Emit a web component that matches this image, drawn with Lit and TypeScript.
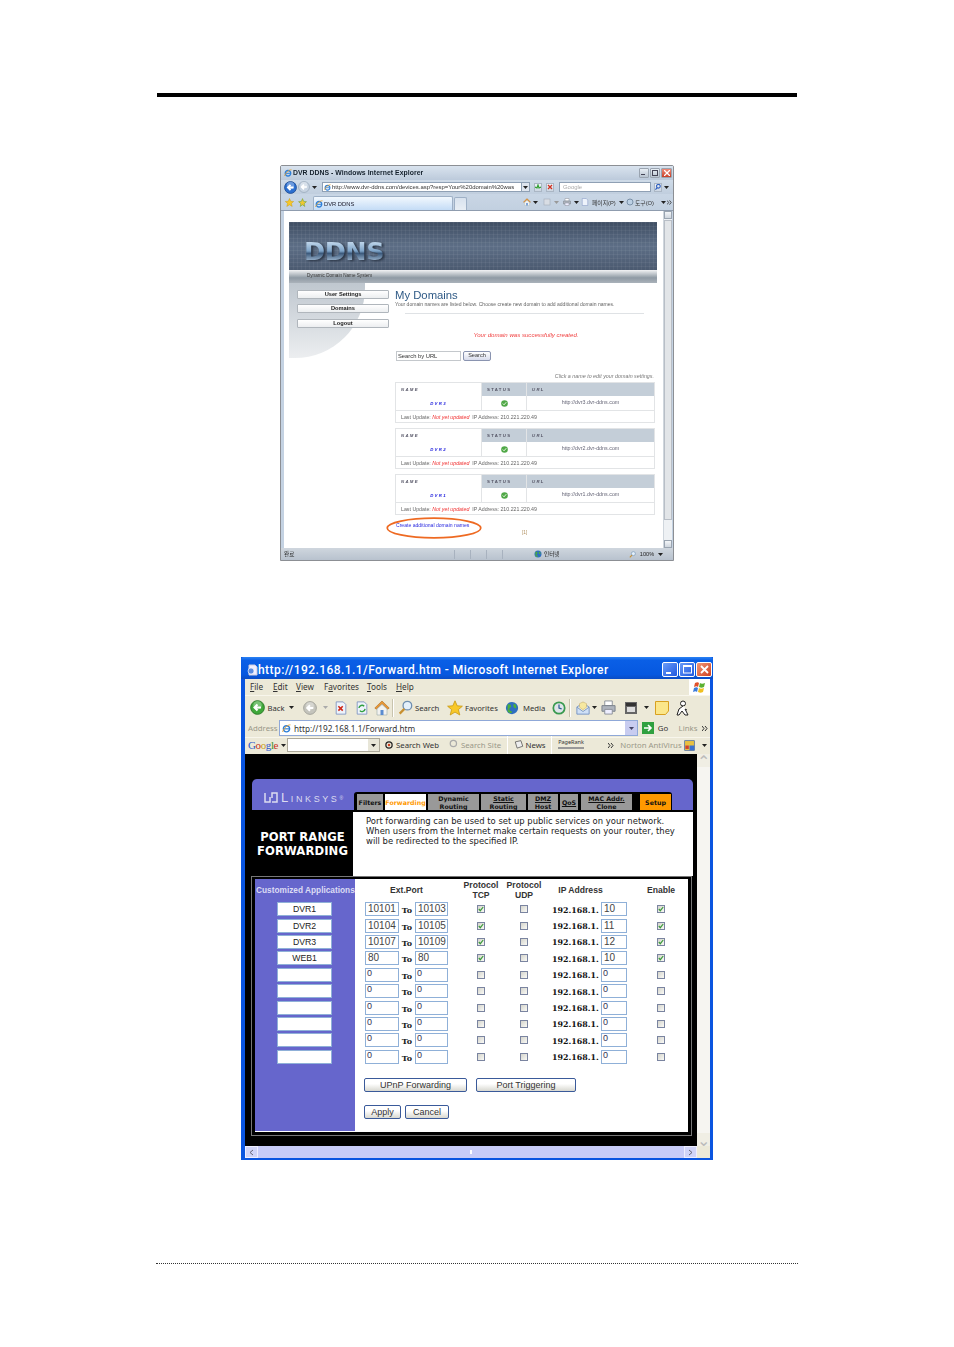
import { LitElement, html, css, svg } from "lit";
import { customElement } from "lit/decorators.js";

const cell = (w: number, c: unknown = "", cls = "") =>
  html`<div class="cell ${cls}" style="width:${w}px">${c}</div>`;
const ic = (s: number, body: unknown) =>
  html`<svg width=${s} height=${s} viewBox="0 0 16 16">${body}</svg>`;

const arrowCircle = (s: number, fill: string, stroke: string, dir = 1) =>
  ic(s, svg`<circle cx="8" cy="8" r="7.3" fill=${fill} stroke=${stroke} stroke-width="1"/>
  <circle cx="8" cy="5.5" r="4.5" fill="#fff" opacity=".3"/>
  <path d=${dir > 0 ? "M11.8 8H5.5M8 4.8 4.8 8 8 11.2" : "M4.2 8h6.3M8 4.8 11.2 8 8 11.2"} fill="none" stroke="#fff" stroke-width="2.2"/>`);
const tri = (c = "#222") => html`<svg width="5" height="3" viewBox="0 0 5 3"><path d="M0 0h5L2.5 3z" fill=${c}/></svg>`;
const chev = (c = "#333") => html`<svg width="6" height="5" viewBox="0 0 6 5"><path d="M0 0l2 2.5L0 5M3 0l2 2.5L3 5" fill="none" stroke=${c}/></svg>`;
const star = (s: number) => ic(s, svg`<path d="M8 .8 10.2 5.8 15.4 6.2 11.4 9.6 12.8 15 8 12.1 3.2 15 4.6 9.6.6 6.2 5.8 5.8z" fill="#f8c828" stroke="#c89810" stroke-width=".8"/>`);
const ie = (s: number) => ic(s, svg`<circle cx="8" cy="8.5" r="5.5" fill="none" stroke="#2c7ed8" stroke-width="2.6"/><path d="M3 8.6h10" stroke="#2c7ed8" stroke-width="2"/><path d="M1 14C4 6 10 1.5 15 1.5" fill="none" stroke="#f0a020" stroke-width="1.6"/>`);
const doc = (s: number, inner: unknown) => ic(s, svg`<path d="M2.5 1h8l3 3v11h-11z" fill="#eef3fb" stroke="#7f93c0"/>${inner}`);
const home = (s: number) => ic(s, svg`<path d="M8 1 .8 8l1.4 1.2L8 3.8l5.8 5.4L15.2 8z" fill="#e89838" stroke="#b06a18" stroke-width=".6"/><path d="M3 9v6h10V9L8 4.5z" fill="#f2f2f0" stroke="#9aa" stroke-width=".6"/><rect x="6.5" y="10" width="3" height="5" fill="#5a8cd0"/>`);
const globe = (s: number) => ic(s, svg`<circle cx="8" cy="8" r="7" fill="#2f6fc0"/><path d="M3 4c2-1 4 0 4 2S4 8 5 10s3 1 3 3c-2 1.500-4 .5-5-1M10 3c2 0 3 2 3 4s-2 1-3 0 0-3 0-4z" fill="#4caf3c"/>`);
const printer = (s: number) => ic(s, svg`<path d="M4 1h8v5H4z" fill="#fff" stroke="#8a8f98"/><path d="M1 6h14v6H1z" fill="#aeb4bd" stroke="#7a808a"/><path d="M4 10h8v5H4z" fill="#eef" stroke="#8a8f98"/>`);
const magnifier = (s: number) => ic(s, svg`<circle cx="10" cy="6" r="4.6" fill="#e4f0fb" stroke="#6f8fb0" stroke-width="1.4"/><path d="M6.800 9.500 1.800 14.500" stroke="#c89030" stroke-width="2.4"/>`);
const mail = (s: number) => ic(s, svg`<path d="M1 7l7-5 7 5v8H1z" fill="#cfe0f6" stroke="#6f8fc0"/><path d="M1 7l7 5 7-5" fill="#f4f0d8" stroke="#6f8fc0"/><path d="M4 3l4-2 4 2v4l-4 3-4-3z" fill="#f6e8a0" stroke="#c0a050" stroke-width=".5"/>`);
const windowBtn = (cls: string, inner: unknown) => html`<div class="wbtn ${cls}">${inner}</div>`;
const okIcon = html`<svg width="7" height="7" viewBox="0 0 8 8"><circle cx="4" cy="4" r="3.800" fill="#50a848"/><path d="M2 4l1.500 1.500L6 2.500" fill="none" stroke="#e8f8e0" stroke-width="1.100"/></svg>`;

const domains = ["DVR3", "DVR2", "DVR1"];
const rows = [
  ["DVR1", "10101", "10103", 1, "10", 1],
  ["DVR2", "10104", "10105", 1, "11", 1],
  ["DVR3", "10107", "10109", 1, "12", 1],
  ["WEB1", "80", "80", 1, "10", 1],
  ...Array.from({ length: 6 }, () => ["", "0", "0", 0, "0", 0]),
] as [string, string, string, number, string, number][];
const tabs = [
  { t: ["Filters"], w: 26, m: 3 },
  { t: ["Forwarding"], w: 41, m: 2, cls: "on" },
  { t: ["Dynamic", "Routing"], w: 51, m: 2 },
  { t: ["Static", "Routing"], w: 45, m: 2, cls: "ul" },
  { t: ["DMZ", "Host"], w: 30, m: 2, cls: "ul" },
  { t: ["QoS"], w: 18, m: 2, cls: "ul" },
  { t: ["MAC Addr.", "Clone"], w: 51, m: 3, cls: "ul" },
  { t: ["Setup"], w: 31, m: 8, cls: "setup" },
];
const check = (on: number) => html`<div class="cb">${on ? html`<svg width="6" height="6" viewBox="0 0 6 6"><path d="M.8 3l1.500 1.700L5.200 1" fill="none" stroke="#3a9a3a" stroke-width="1.200"/></svg>` : ""}</div>`;

@customElement("app-root")
export class AppRoot extends LitElement {
  static styles = css`
    :host { display: block; width: 954px; height: 1347px; background: #fff; overflow: hidden; font-family: "Liberation Sans", "Noto Sans CJK KR", sans-serif; }
    .page { display: flex; flex-direction: column; padding-top: 93px; }
    .rule { margin-left: 157px; width: 640px; height: 4px; background: #000; }
    .dots { margin: 103px 0 0 156px; width: 642px; border-top: 1px dotted #333; }
    .cell { display: flex; align-items: center; justify-content: center; height: 100%; flex: none; white-space: nowrap; }
    .cell.l { justify-content: flex-start; }
    .row { display: flex; align-items: center; }
    .push { margin-left: auto; }

    /* Window 1 */
    .w1 { margin: 68px 0 0 280px; width: 394px; height: 396px; box-sizing: border-box; border: 1px solid #8c8f94; background: #c4d2e2; display: flex; flex-direction: column; filter: blur(.35px); position: relative; border-radius: 2px 2px 0 0; }
    .w1 .title { height: 14px; background: linear-gradient(#d9e3ee, #bccadb); font: bold 6.850px "Liberation Sans", sans-serif; color: #14202c; letter-spacing: .05px; }
    .w1 .wbtn { width: 10px; height: 10px; border: 1px solid #9aa4b0; box-sizing: border-box; background: linear-gradient(#e8eef4, #b9c4d0); display: flex; align-items: center; justify-content: center; margin-right: 1px; border-radius: 1px; }
    .w1 .wbtn.x { background: linear-gradient(#ee8a78, #c84028); width: 11px; }
    .w1 .addr { height: 15px; background: linear-gradient(#cfdbe8, #c0cede); font-size: 5.950px; color: #222; }
    .w1 .ibox { height: 10px; background: #fff; border: 1px solid #8fa0b4; box-sizing: border-box; width: 100%; display: flex; align-items: center; padding-left: 1px; color: #333; overflow: hidden; gap: 1px; }
    .w1 .ibox.g { color: #aaa; padding-left: 3px; }
    .w1 .ddn { margin-left: auto; flex: none; width: 7px; height: 8px; background: #dfe5ee; border-left: 1px solid #8fa0b4; display: flex; align-items: center; justify-content: center; }
    .w1 .small { width: 8px; height: 9px; background: linear-gradient(#eef2f7, #ccd6e2); border: 1px solid #aab6c4; box-sizing: border-box; display: flex; align-items: center; justify-content: center; }
    .w1 .tabs { height: 17px; background: linear-gradient(#c9d6e5, #c2d0e0); font-size: 5.800px; color: #333; border-bottom: 1px solid #8f9cae; box-sizing: border-box; }
    .w1 .tab { width: 100%; height: 14px; align-self: flex-end; background: linear-gradient(#f2f8fe, #c4dcf6); border: 1px solid #9eb0c6; border-bottom: 0; box-sizing: border-box; border-radius: 2px 2px 0 0; display: flex; align-items: center; gap: 1px; padding-left: 1px; color: #223; }
    .w1 .newtab { width: 100%; height: 13px; align-self: flex-end; background: linear-gradient(#d8e2ee, #e8eef4); border: 1px solid #9eb0c6; border-bottom: 0; box-sizing: border-box; border-radius: 2px 2px 0 0; }
    .w1 .content { flex: none; height: 337px; display: flex; padding-left: 3px; }
    .w1 .doc { width: 379px; height: 337px; background: #fff; padding: 11px 0 0 5px; box-sizing: border-box; }
    .banner { width: 368px; height: 48px; background-color: #4a5b72; background-image: linear-gradient(90deg, rgba(255,255,255,.05) 1px, transparent 1px), linear-gradient(rgba(255,255,255,.05) 1px, transparent 1px), linear-gradient(#3f4e63, #5d6e86 50%, #4b5a70); background-size: 4px 4px, 4px 4px, 100% 100%; display: flex; align-items: center; padding-left: 15px; box-sizing: border-box; }
    .logo { font: bold 25.500px "DejaVu Sans", sans-serif; letter-spacing: -.5px; background: linear-gradient(#d4e6f6 10%, #7ea4c8 50%, #3c5a7c 58%, #b8d0e6 90%); -webkit-background-clip: text; background-clip: text; color: transparent; filter: drop-shadow(2px 1px 1px #2a3444); margin-top: 9px; }
    .strip { width: 368px; height: 13px; background: linear-gradient(#f2f3f4, #8f9aa4 60%, #aab2ba); font-size: 4.600px; color: #333; padding-left: 18px; box-sizing: border-box; line-height: 12px; }
    .body { display: flex; position: relative; }
    .side { width: 106px; height: 240px; display: flex; flex-direction: column; position: relative; }
    .side::before { content: ""; position: absolute; left: 0; top: 0; width: 76px; height: 75px; background: linear-gradient(#bfc7cf, #eceef0); border-bottom-right-radius: 70px 70px; }
    .navb { position: relative; margin-left: 8px; width: 92px; height: 9px; margin-top: 5px; background: linear-gradient(#fff, #eceef0); border: 1px solid #b0b6bc; box-sizing: border-box; border-radius: 1px; font: bold 5.700px/7px "Liberation Sans", sans-serif; text-align: center; color: #222; }
    .navb.first { margin-top: 7px; }
    .navb.last { margin-top: 6px; }
    .main { width: 262px; display: flex; flex-direction: column; color: #666; font-size: 5.050px; }
    .h1 { margin-top: 6px; font: 11.300px/12px "Liberation Sans", sans-serif; color: #2f5a86; }
    .sub { line-height: 6px; white-space: nowrap; }
    .hr { margin: 6px 0 0 10px; width: 239px; height: 1px; background: #dfe2e5; }
    .msg { margin-top: 17px; height: 8px; line-height: 8px; font-style: italic; font-size: 6.100px; color: #f04040; text-align: center; }
    .search { margin: 12px 0 0 1px; display: flex; gap: 2px; height: 10px; }
    .sinput { width: 65px; height: 10px; border: 1px solid #c4c8cc; box-sizing: border-box; color: #333; font-size: 5.800px; line-height: 8px; padding-left: 1px; }
    .sbtn { width: 28px; height: 10px; border: 1px solid #8a94b0; box-sizing: border-box; background: linear-gradient(#fff, #d8dcec); font-size: 5.600px; line-height: 7px; text-align: center; color: #333; border-radius: 2px; }
    .hint { margin-top: 11px; line-height: 8px; height: 8px; text-align: right; padding-right: 3px; font-style: italic; font-size: 5.350px; color: #777; }
    .dt { margin-top: 2px; width: 260px; height: 41px; border: 1px solid #e2e4e6; box-sizing: border-box; display: grid; grid-template-columns: 85px 45px 1fr; grid-template-rows: 13px 14px 1fr; }
    .dt + .dt { margin-top: 5px; }
    .dt > div { display: flex; align-items: center; }
    .dh { font: italic bold 4.300px "Liberation Sans", sans-serif; letter-spacing: 1.300px; color: #556; padding-left: 5px; }
    .dh.s { background: #c4ced8; font-style: normal; border-left: 1px solid #e2e4e6; }
    .dh.u { background: #c4ced8; border-left: 1px solid #e2e4e6; }
    .dn { justify-content: center; font: italic bold 4.300px "Liberation Sans", sans-serif; letter-spacing: 1.300px; color: #2222dd; }
    .ds { justify-content: center; border-left: 1px solid #e2e4e6; }
    .du { justify-content: center; border-left: 1px solid #e2e4e6; font-size: 5.350px; color: #667; padding-bottom: 2px; box-sizing: border-box; }
    .df { grid-column: 1 / 4; border-top: 1px solid #e2e4e6; padding-left: 5px; font-size: 5.250px; color: #666; white-space: pre; }
    .df i { color: #f03030; }
    .lnk { margin: 6px 0 0 1px; line-height: 8px; height: 8px; font-size: 5.100px; color: #2a2ae0; position: relative; }
    .oval { position: absolute; left: -10px; top: -4px; width: 96px; height: 22px; }
    .pg { margin-left: 127px; font-size: 4.800px; color: #b09060; line-height: 8px; }
    .w1 .sb { width: 9px; background: #eef1f4; border-left: 1px solid #cfd6dd; box-sizing: border-box; display: flex; flex-direction: column; }
    .w1 .sb .b { height: 8px; background: linear-gradient(#f4f6f8, #cfd6de); border: 1px solid #9aa4b0; box-sizing: border-box; }
    .w1 .sb .th { height: 300px; background: #e2e5e8; border: 1px solid #b8bec6; box-sizing: border-box; margin-top: 1px; }
    .w1 .sb .sp { flex: 1; }
    .w1 .status { height: 12px; background: linear-gradient(#cfd6de, #b8c2ce); font-size: 5.600px; color: #222; }
    .w1 .sep { width: 1px; height: 9px; background: #a8b2bf; }

    /* Window 2 */
    .w2 { margin: 96px 0 0 241px; width: 472px; height: 503px; box-sizing: border-box; border: solid #0a55e0; border-width: 0 3px 2px 4px; background: #ece9d8; display: flex; flex-direction: column; font-family: "Noto Sans", sans-serif; color: #333; }
    .w2 .title { margin: 0 -3px 0 -4px; height: 22px; background: linear-gradient(#2b83f4, #0a5fe6 15%, #0658e0 80%, #0a4cc4); color: #fff; font: 500 12px "Roboto", sans-serif; letter-spacing: .44px; white-space: nowrap; border-radius: 3px 3px 0 0; padding-top: 4px; box-sizing: border-box; }
    .w2 .title .push { margin-top: -1px; }
    .w2 .wbtn { width: 16px; height: 15px; box-sizing: border-box; border: 1px solid #fff; border-radius: 2px; background: linear-gradient(135deg, #6a9cf8, #1e58e0); margin-right: 1px; display: flex; align-items: center; justify-content: center; }
    .w2 .wbtn.x { background: linear-gradient(135deg, #f09878, #d04020); }
    .w2 .menu { height: 16px; font-size: 8.200px; background: #ece9d8; }
    .w2 .menu .cell { padding-bottom: 2px; box-sizing: border-box; }
    .w2 .menu u { text-decoration: underline; }
    .w2 .flag { margin-left: auto; width: 21px; height: 16px; background: #fff; display: flex; align-items: center; justify-content: center; }
    .w2 .bar { height: 24px; font-size: 7.700px; border-top: 1px solid #f8f6ec; box-sizing: border-box; }
    .w2 .vsep { width: 1px; height: 18px; background: #c8c4ae; border-right: 1px solid #fff; }
    .w2 .ad { height: 18px; font-size: 7.800px; }
    .w2 .adbox { width: 100%; height: 16px; background: #fff; border: 1px solid #8fa8d8; box-sizing: border-box; display: flex; align-items: center; gap: 3px; padding-left: 2px; color: #333; font-size: 8.200px; }
    .w2 .adbox .dd { margin-left: auto; width: 12px; height: 14px; background: #c8ccf0; display: flex; align-items: center; justify-content: center; }
    .w2 .gg { height: 17px; font-size: 7.800px; border-top: 1px solid #f8f6ec; box-sizing: border-box; padding-bottom: 2px; }
    .google { font: 11px "Liberation Serif", serif; letter-spacing: -.4px; }
    .google .b { color: #2a55c8; } .google .r { color: #c83020; } .google .y { color: #c8a020; } .google .g { color: #30902a; }
    .gin { width: 100%; height: 14px; background: #fff; border: 1px solid #aca899; box-sizing: border-box; display: flex; justify-content: flex-end; }
    .gin .dd { width: 11px; background: #e8e6d8; display: flex; align-items: center; justify-content: center; }
    .muted { color: #9a9888; }
    .pr { display: flex; flex-direction: column; align-items: stretch; font-size: 5.500px; line-height: 7px; height: 12px; }
    .pr span { height: 2px; border: 1px solid #999; background: #eee; box-sizing: border-box; margin-top: 1px; }

    .view { flex: none; height: 392px; display: flex; background: #000; }
    .screen { width: 452px; background: #000; padding-top: 25px; box-sizing: border-box; }
    .vsb { width: 13px; background: #f6f5f1; display: flex; flex-direction: column; justify-content: space-between; align-items: center; }
    .vsb div { width: 13px; height: 13px; background: #f0eee4; color: #bbb; display: flex; align-items: center; justify-content: center; }
    .hsb { height: 12px; flex: none; display: flex; background: #eef; }
    .hsb .e { width: 13px; height: 12px; background: #d0d4f8; border: 1px solid #eef; box-sizing: border-box; display: flex; align-items: center; justify-content: center; }
    .hsb .t { flex: 1; background: #c8ccf8; display: flex; align-items: center; justify-content: center; }
    .hsb .t span { width: 2px; height: 4px; background: #fff; }
    .hsb .c { width: 13px; background: #ece9d8; }

    .lhead { margin-left: 7px; width: 441px; height: 31px; background: #6666cc; border-radius: 5px 5px 0 0; display: flex; align-items: flex-end; }
    .brand { width: 102px; height: 31px; display: flex; align-items: center; gap: 3px; padding: 6px 0 0 12px; box-sizing: border-box; color: #dcdcf0; font: 13px "Liberation Sans", sans-serif; letter-spacing: 2.600px; font-variant: small-caps; }
    .brand sup { font-size: 5px; letter-spacing: 0; margin-left: -3px; }
    .tabs2 { height: 18px; width: 318px; background: #000; display: flex; border-radius: 3px 3px 0 0; padding-top: 2px; box-sizing: border-box; }
    .t2 { flex: none; height: 16px; background: #999; display: flex; flex-direction: column; align-items: center; justify-content: center; overflow: hidden; font: bold 6.300px/8px "DejaVu Sans", sans-serif; color: #111; padding-top: 2px; box-sizing: border-box; white-space: nowrap; }
    .t2.two { justify-content: flex-start; padding-top: 1px; }
    .t2.on { background: #fff; color: #ff9900; }
    .t2.setup { background: #ff9900; }
    .t2.ul span:first-child { text-decoration: underline; }
    .lmid { display: flex; margin: 2px 0 0 0; height: 64px; }
    .lname { width: 108px; color: #fff; font: bold 11.600px/14px "DejaVu Sans", sans-serif; text-align: center; padding: 18px 0 0 7px; box-sizing: border-box; letter-spacing: .1px; }
    .ldesc { width: 340px; background: #fff; color: #222; font: 8.440px/10px "DejaVu Sans", sans-serif; padding: 4px 0 0 13px; box-sizing: border-box; white-space: nowrap; }
    .frame { margin: 0 0 0 6px; width: 441px; height: 260px; box-sizing: border-box; border: 1px solid #777; padding: 2px 3px 3px; background: #000; }
    .inner { display: flex; border-bottom: 1px solid #fff; height: 252px; background: #fff; }
    .apps { width: 100px; background: #6666cc; flex: none; }
    .apphd { height: 22px; display: flex; align-items: center; font: bold 8.300px "Liberation Sans", sans-serif; color: #dcdcf4; white-space: nowrap; padding-left: 1px; box-sizing: border-box; }
    .appgrid { display: grid; grid-auto-rows: 16.400px; padding-left: 22px; }
    .fields { width: 333px; padding-left: 10px; box-sizing: border-box; font: 8.600px "Liberation Sans", sans-serif; color: #222; }
    .hdr, .frow { display: grid; grid-template-columns: 34px 16px 33px 66px 20px 18px 49px 26px 62px; align-items: center; justify-items: center; }
    .hdr { height: 22px; font-weight: bold; line-height: 10px; text-align: center; color: #333; white-space: nowrap; }
    .hdr .ep { grid-column: 1 / 4; }
    .hdr .ip { grid-column: 6 / 9; }
    .hdr .wide { width: 0; display: flex; justify-content: center; }
    .frow { height: 16.400px; }
    .fi { width: 100%; height: 14px; background: #fff; border: 1px solid #8fb0d8; box-sizing: border-box; font: 10px/12px "Liberation Sans", sans-serif; color: #444; padding-left: 2px; white-space: nowrap; overflow: hidden; }
    .fi.z { font-size: 9px; line-height: 9px; color: #335; padding-left: 1px; }
    .fi.c { text-align: center; padding: 0; color: #222; width: 55px; font-size: 8.700px; }
    .to { font: bold 8px "DejaVu Serif", serif; color: #222; padding-top: 2px; }
    .ipx { font: bold 7.900px "DejaVu Serif", serif; color: #111; white-space: nowrap; padding-top: 2px; justify-self: start; }
    .cb { width: 8px; height: 8px; border: 1px solid #7a84a0; box-sizing: border-box; background: linear-gradient(135deg, #d4d4cc, #fafaf6); display: flex; align-items: center; justify-content: center; }
    .cbcell { padding-left: 6px; justify-self: center; }
    .btns { display: flex; margin: 13.500px 0 0 -1px; }
    .fb { height: 14px; box-sizing: border-box; border: 1px solid #3a5a9a; border-radius: 2px; background: linear-gradient(#fff 40%, #d8d8d0); font: 9px/12px "Liberation Sans", sans-serif; color: #333; text-align: center; }
    .upnp { width: 103px; margin-right: 9px; } .ptrig { width: 100px; }
    .apply { width: 37px; margin-right: 4px; } .cancel { width: 44px; }
    .btns2 { margin-top: 13px; }
  `;

  private w1() {
    return html`<div class="w1">
      <div class="title row">
        ${cell(2)}${cell(10, ie(8))}<span>DVR DDNS - Windows Internet Explorer</span>
        <div class="row push">
          ${windowBtn("", html`<svg width="6" height="6"><rect y="4" width="4" height="1" fill="#445"/></svg>`)}
          ${windowBtn("", html`<svg width="6" height="6"><rect x=".5" y=".5" width="5" height="5" fill="none" stroke="#445"/></svg>`)}
          ${windowBtn("x", html`<svg width="6" height="6"><path d="M0 0l6 6M6 0l-6 6" stroke="#fff" stroke-width="1.300"/></svg>`)}
        </div>
      </div>
      <div class="addr row">
        ${cell(2)}${cell(14, arrowCircle(13, "#2c6fd0", "#1c4a90"))}${cell(14, arrowCircle(12, "#c8d4e2", "#98a8ba"))}${cell(6, tri())}${cell(5)}
        ${cell(208, html`<div class="ibox">${ie(7)}<span>http://www.dvr-ddns.com/devices.asp?resp=Your%20domain%20was</span><div class="ddn">${tri()}</div></div>`)}
        ${cell(3)}${cell(10, html`<div class="small"><svg width="6" height="6"><path d="M0 3l2 1 1-3 1 3 2-1" fill="none" stroke="#30a030" stroke-width="1.200"/></svg></div>`)}${cell(2)}
        ${cell(10, html`<div class="small"><svg width="6" height="6"><path d="M1 1l4 4M5 1l-4 4" stroke="#d03020" stroke-width="1.300"/></svg></div>`)}${cell(4)}
        ${cell(92, html`<div class="ibox g">Google</div>`)}${cell(2)}
        ${cell(9, html`<div class="small">${ic(6, svg`<circle cx="9" cy="6" r="5" fill="none" stroke="#3060c0" stroke-width="3"/><path d="M6 10 1 15" stroke="#3060c0" stroke-width="3"/>`)}</div>`)}${cell(8, tri())}
      </div>
      <div class="tabs row">
        ${cell(2)}${cell(13, star(9))}${cell(13, ic(9, svg`<path d="M8 1 10 6l5 .5-4 3.500 1 5-4-3-4 3 1-5-4-3.500L6 6z" fill="#f0c830" stroke="#70a030"/>`))}${cell(4)}
        ${cell(140, html`<div class="tab">${ie(8)}<span>DVR DDNS</span></div>`)}${cell(1)}
        ${cell(13, html`<div class="newtab"></div>`)}${cell(55)}
        ${cell(10, home(8))}${cell(7, tri())}${cell(2)}${cell(12, ic(8, svg`<rect x="2" y="2" width="12" height="12" fill="#d8dde4" stroke="#9aa4b0"/>`))}${cell(7, tri("#999"))}${cell(2)}
        ${cell(10, printer(8))}${cell(8, tri())}${cell(9, doc(8, ""))}${cell(3)}${cell(26, "페이지(P)", "l")}${cell(7, tri())}${cell(10, ic(8, svg`<circle cx="8" cy="8" r="6" fill="#bcd0e4" stroke="#7a90a8" stroke-width="2"/>`))}${cell(25, "도구(O)", "l")}${cell(7, tri())}${cell(5, chev())}
      </div>
      <div class="content">
        <div class="doc">
          <div class="banner"><span class="logo">DDNS</span></div>
          <div class="strip">Dynamic Domain Name System</div>
          <div class="body">
            <div class="side">
              <div class="navb first">User Settings</div>
              <div class="navb">Domains</div>
              <div class="navb last">Logout</div>
            </div>
            <div class="main">
              <div class="h1">My Domains</div>
              <div class="sub">Your domain names are listed below.  Choose create new domain to add additional domain names.</div>
              <div class="hr"></div>
              <div class="msg">Your domain was successfully created.</div>
              <div class="search"><div class="sinput">Search by URL</div><div class="sbtn">Search</div></div>
              <div class="hint">Click a name to edit your domain settings.</div>
              ${domains.map((d, i) => html`<div class="dt">
                <div class="dh">NAME</div><div class="dh s">STATUS</div><div class="dh u">URL</div>
                <div class="dn">${d}</div><div class="ds">${okIcon}</div><div class="du">http://dvr${3 - i}.dvr-ddns.com</div>
                <div class="df">Last Update: <i>Not yet updated</i>  IP Address: 210.221.220.49</div>
              </div>`)}
              <div class="lnk">Create additional domain names
                <svg class="oval" viewBox="0 0 96 22"><ellipse cx="48" cy="11" rx="46.800" ry="9.800" fill="none" stroke="#ee6a22" stroke-width="1.700"/></svg>
              </div>
              <div class="pg">[1]</div>
            </div>
          </div>
        </div>
        <div class="sb"><div class="b"></div><div class="th"></div><div class="sp"></div><div class="b"></div></div>
      </div>
      <div class="status row">
        ${cell(3)}${cell(80, "완료", "l")}${cell(90)}${cell(1, html`<div class="sep"></div>`)}${cell(15)}${cell(1, html`<div class="sep"></div>`)}${cell(15)}${cell(1, html`<div class="sep"></div>`)}${cell(15)}${cell(1, html`<div class="sep"></div>`)}${cell(30)}${cell(9, globe(8))}${cell(2)}${cell(84, "인터넷", "l")}${cell(8, magnifier(7))}${cell(22, "100%")}${cell(5, tri())}
      </div>
    </div>`;
  }

  private w2() {
    return html`<div class="w2">
      <div class="title row">
        ${cell(5)}${cell(12, html`<svg width="11" height="12" viewBox="0 0 11 12"><path d="M2 1h6l2 2v8H2z" fill="#eef" stroke="#ccd"/><circle cx="4" cy="7" r="3" fill="#5a8ce0" stroke="#fff" stroke-width=".6"/></svg>`)}<span>http://192.168.1.1/Forward.htm - Microsoft Internet Explorer</span>
        <div class="row push">
          ${windowBtn("", html`<svg width="8" height="8"><rect y="6" width="5" height="2" fill="#fff"/></svg>`)}
          ${windowBtn("", html`<svg width="9" height="9"><rect x=".5" y="1" width="8" height="7" fill="none" stroke="#fff"/><rect width="9" height="2" fill="#fff"/></svg>`)}
          ${windowBtn("x", html`<svg width="9" height="9"><path d="M1 1l7 7M8 1 1 8" stroke="#fff" stroke-width="1.800"/></svg>`)}
        </div>
      </div>
      <div class="menu row">
        ${cell(5)}${cell(23, html`<span><u>F</u>ile</span>`, "l")}${cell(23, html`<span><u>E</u>dit</span>`, "l")}${cell(28, html`<span><u>V</u>iew</span>`, "l")}${cell(43, html`<span>F<u>a</u>vorites</span>`, "l")}${cell(29, html`<span><u>T</u>ools</span>`, "l")}${cell(25, html`<span><u>H</u>elp</span>`, "l")}
        <div class="flag"><svg width="13" height="12" viewBox="0 0 13 12"><path d="M2 2c2-1 3-1 4 0L5 6C4 5 3 5 1 6z" fill="#e0502a"/><path d="M7 2c1 1 3 1 5 0l-1 4c-2 1-3 1-5 0z" fill="#5ab030"/><path d="M1 7c2-1 3-1 4 0l-1 4c-1-1-2-1-4 0z" fill="#3a7ad8"/><path d="M6 7c1 1 3 1 5 0l-1 4c-2 1-3 1-5 0z" fill="#f0c020"/></svg></div>
      </div>
      <div class="bar row">
        ${cell(4)}${cell(16, arrowCircle(15, "#3fa83a", "#2a7a28"))}${cell(22, "Back")}${cell(9, tri())}${cell(6)}${cell(16, arrowCircle(14, "#c4c4bc", "#a0a098"))}${cell(5)}${cell(5, tri("#aaa"))}${cell(4)}
        ${cell(18, doc(14, svg`<path d="M5 6l5 5M10 6l-5 5" stroke="#d02818" stroke-width="1.800"/>`))}${cell(3)}${cell(18, doc(14, svg`<path d="M4.500 8a3.500 3.500 0 0 1 6-2M11.500 9a3.500 3.500 0 0 1-6 2" fill="none" stroke="#30a040" stroke-width="1.600"/>`))}${cell(2)}${cell(18, home(16))}${cell(1)}${cell(2, html`<div class="vsep"></div>`)}${cell(3)}
        ${cell(17, magnifier(15))}${cell(1)}${cell(25, "Search", "l")}${cell(6)}${cell(18, star(16))}${cell(1)}${cell(33, "Favorites", "l")}${cell(6)}${cell(16, globe(14))}${cell(3)}${cell(21, "Media", "l")}${cell(8)}${cell(14, html`<svg width="14" height="14" viewBox="0 0 16 16"><circle cx="8" cy="8" r="6.500" fill="#dfe4ea" stroke="#3a9a50" stroke-width="2"/><path d="M8 4v4l3 1" fill="none" stroke="#2a5a90" stroke-width="1.400"/></svg>`)}${cell(3)}${cell(2, html`<div class="vsep"></div>`)}${cell(4)}
        ${cell(15, mail(14))}${cell(8, tri())}${cell(20, printer(15))}${cell(6)}${cell(14, html`<svg width="12" height="12" viewBox="0 0 12 12"><rect width="12" height="12" fill="#666"/><rect x="1" y="1" width="10" height="3" fill="#333"/><rect x="2" y="5" width="8" height="5" fill="#ddd"/></svg>`)}${cell(6)}${cell(5, tri())}${cell(5)}
        ${cell(16, html`<svg width="14" height="14" viewBox="0 0 14 14"><path d="M.5.500h13V10l-3 3.500H.5z" fill="#fbe68a" stroke="#d8a020"/></svg>`)}${cell(5)}${cell(16, html`<svg width="14" height="16" viewBox="0 0 14 16"><circle cx="7" cy="3.500" r="2.500" fill="#fff" stroke="#222"/><path d="M7 6 3 9 1 15h2l3-4 3 4h3L9 9 11 10" fill="#fff" stroke="#222"/></svg>`)}
      </div>
      <div class="ad row">
        ${cell(3)}${cell(31, html`<span class="muted">Address</span>`, "l")}
        ${cell(359, html`<div class="adbox">${ie(9)}<span>http://192.168.1.1/Forward.htm</span><div class="dd">${tri("#446")}</div></div>`)}
        ${cell(3)}${cell(13, html`<svg width="12" height="12" viewBox="0 0 12 12"><rect width="12" height="12" fill="#30a040"/><path d="M2 6h7M6 3l3 3-3 3" fill="none" stroke="#fff" stroke-width="1.600"/></svg>`)}${cell(3)}${cell(12, "Go")}${cell(9)}${cell(20, html`<span class="muted">Links</span>`)}${cell(4)}${cell(6, chev())}
      </div>
      <div class="gg row">
        ${cell(3)}${cell(32, html`<span class="google"><span class="b">G</span><span class="r">o</span><span class="y">o</span><span class="b">g</span><span class="g">l</span><span class="r">e</span></span>`, "l")}${cell(7, tri())}
        ${cell(93, html`<div class="gin"><div class="dd">${tri()}</div></div>`)}${cell(3)}
        ${cell(11, ic(10, svg`<circle cx="8" cy="8" r="5" fill="none" stroke="#222" stroke-width="2"/><circle cx="8" cy="8" r="2" fill="#d04020"/>`))}${cell(1)}${cell(45, "Search Web")}${cell(8)}
        ${cell(11, html`<span class="muted">${ic(10, svg`<circle cx="7" cy="7" r="5" fill="none" stroke="#aaa" stroke-width="2"/>`)}</span>`)}${cell(1)}${cell(42, html`<span class="muted">Search Site</span>`)}${cell(5)}${cell(1, html`<div class="vsep"></div>`)}${cell(5)}
        ${cell(11, ic(10, svg`<path d="M2 3l9-2 3 9-9 3z" fill="#eee" stroke="#333"/>`))}${cell(1)}${cell(21, "News")}${cell(5)}${cell(1, html`<div class="vsep"></div>`)}${cell(5)}
        ${cell(28, html`<div class="pr">PageRank<span></span></div>`)}${cell(23)}${cell(6, chev())}${cell(7)}${cell(60, html`<span class="muted">Norton AntiVirus</span>`)}${cell(3)}${cell(11, ic(11, svg`<rect x="1" y="1" width="14" height="14" fill="#e8c040" stroke="#3a60a0"/><rect x="8" y="8" width="7" height="7" fill="#3a70d0"/><rect x="2" y="8" width="5" height="5" fill="#d04030"/>`))}${cell(7)}${cell(5, tri())}
      </div>
      <div class="view">
        <div class="screen">
          <div class="lhead">
            <div class="brand">
              <svg width="14" height="11" viewBox="0 0 14 11"><path d="M1 1v9h5V5M8 6V1h5v9H8" fill="none" stroke="#dcdcf0" stroke-width="1.500"/></svg>
              <span>Linksys</span><sup>®</sup>
            </div>
            <div class="tabs2">
              ${tabs.map((t) => html`<div class="t2 ${t.cls ?? ""} ${t.t.length > 1 ? "two" : ""}" style="width:${t.w}px;margin-left:${t.m}px">${t.t.map((l) => html`<span>${l}</span>`)}</div>`)}
            </div>
          </div>
          <div class="lmid">
            <div class="lname">PORT RANGE<br />FORWARDING</div>
            <div class="ldesc">Port forwarding can be used to set up public services on your network.<br />When users from the Internet make certain requests on your router, they<br />will be redirected to the specified IP.</div>
          </div>
          <div class="frame">
            <div class="inner">
              <div class="apps">
                <div class="apphd">Customized Applications</div>
                <div class="appgrid">
                  ${rows.map((r) => html`<div class="row"><div class="fi c">${r[0]}</div></div>`)}
                </div>
              </div>
              <div class="fields">
                <div class="hdr">
                  <div class="ep">Ext.Port</div>
                  <div class="wide"><span>Protocol<br />TCP</span></div>
                  <div class="wide"><span>Protocol<br />UDP</span></div>
                  <div class="ip">IP Address</div>
                  <div class="cbcell">Enable</div>
                </div>
                ${rows.map((r) => {
                  const z = r[1].length === 1 ? "z" : "";
                  return html`<div class="frow">
                    <div class="fi ${z}">${r[1]}</div><div class="to">To</div><div class="fi ${z}">${r[2]}</div>
                    ${check(r[3])}${check(0)}
                    <div></div><div class="ipx">192.168.1.</div>
                    <div class="fi ${z}">${r[4]}</div>
                    <div class="cbcell">${check(r[5])}</div>
                  </div>`;
                })}
                <div class="btns"><div class="fb upnp">UPnP Forwarding</div><div class="fb ptrig">Port Triggering</div></div>
                <div class="btns btns2"><div class="fb apply">Apply</div><div class="fb cancel">Cancel</div></div>
              </div>
            </div>
          </div>
        </div>
        <div class="vsb"><div>⌃</div><div>⌄</div></div>
      </div>
      <div class="hsb"><div class="e"><svg width="5" height="7"><path d="M4 1 1 3.500 4 6" fill="none" stroke="#667"/></svg></div><div class="t"><span></span></div><div class="e"><svg width="5" height="7"><path d="M1 1l3 2.500L1 6" fill="none" stroke="#667"/></svg></div><div class="c"></div></div>
    </div>`;
  }

  render() {
    return html`<div class="page">
      <div class="rule"></div>
      ${this.w1()}
      ${this.w2()}
      <div class="dots"></div>
    </div>`;
  }
}
